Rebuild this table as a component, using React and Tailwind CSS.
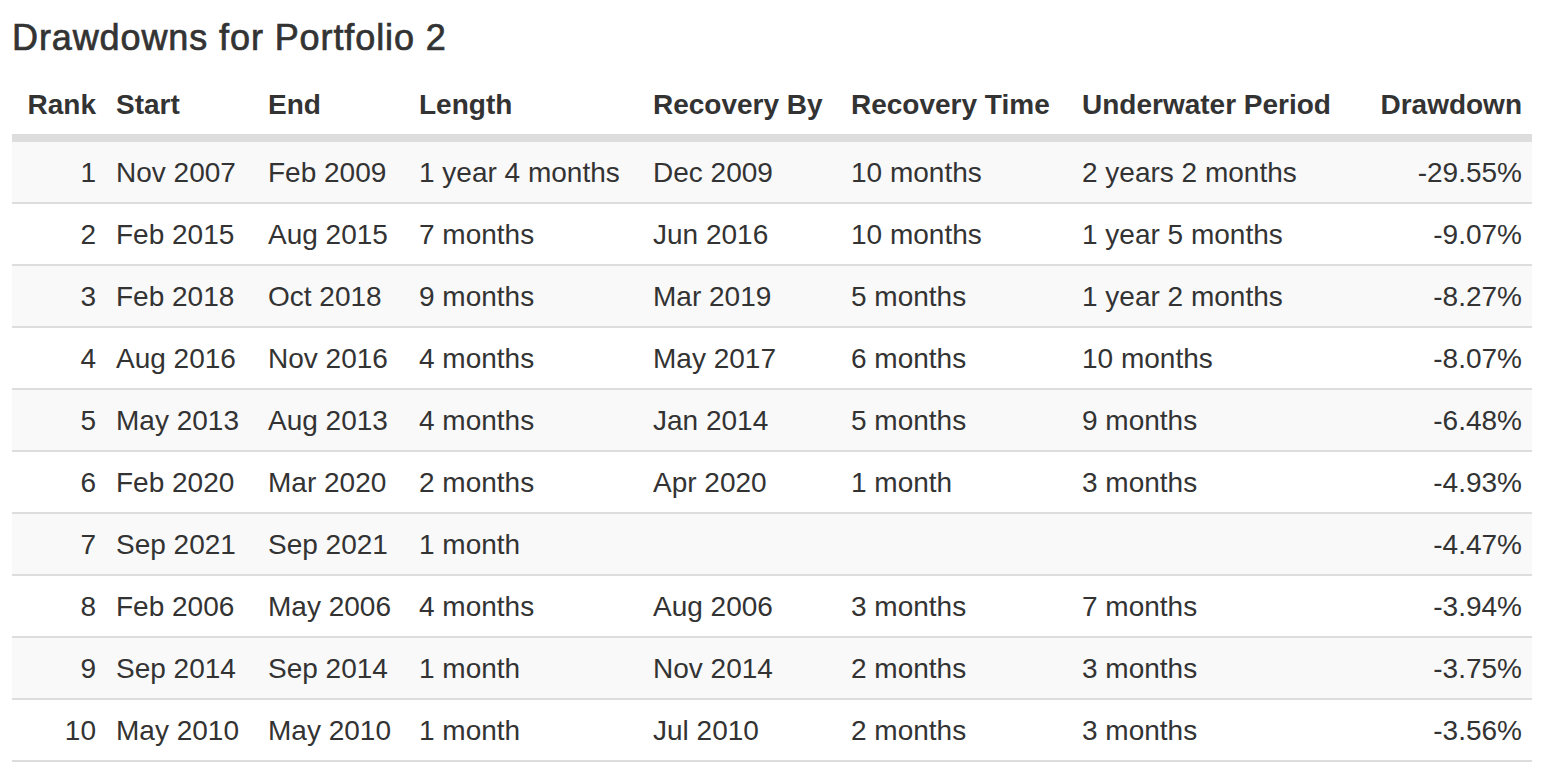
// Drawdowns table — condensed striped table, rendered at 2x scale.

var COLUMNS = [
  { key: 'rank',      label: 'Rank',            width: 'w-[94px]',  right: true },
  { key: 'start',     label: 'Start',           width: 'w-[152px]' },
  { key: 'end',       label: 'End',             width: 'w-[151px]' },
  { key: 'length',    label: 'Length',          width: 'w-[234px]' },
  { key: 'recBy',     label: 'Recovery By',     width: 'w-[198px]' },
  { key: 'recTime',   label: 'Recovery Time',   width: 'w-[231px]' },
  { key: 'under',     label: 'Underwater Period', width: 'w-[297px]' },
  { key: 'drawdown',  label: 'Drawdown',        width: 'w-[163px]', right: true },
]

var ROWS = [
  ['1',  'Nov 2007', 'Feb 2009', '1 year 4 months', 'Dec 2009', '10 months', '2 years 2 months', '-29.55%'],
  ['2',  'Feb 2015', 'Aug 2015', '7 months',        'Jun 2016', '10 months', '1 year 5 months',  '-9.07%'],
  ['3',  'Feb 2018', 'Oct 2018', '9 months',        'Mar 2019', '5 months',  '1 year 2 months',  '-8.27%'],
  ['4',  'Aug 2016', 'Nov 2016', '4 months',        'May 2017', '6 months',  '10 months',        '-8.07%'],
  ['5',  'May 2013', 'Aug 2013', '4 months',        'Jan 2014', '5 months',  '9 months',         '-6.48%'],
  ['6',  'Feb 2020', 'Mar 2020', '2 months',        'Apr 2020', '1 month',   '3 months',         '-4.93%'],
  ['7',  'Sep 2021', 'Sep 2021', '1 month',         '',         '',          '',                 '-4.47%'],
  ['8',  'Feb 2006', 'May 2006', '4 months',        'Aug 2006', '3 months',  '7 months',         '-3.94%'],
  ['9',  'Sep 2014', 'Sep 2014', '1 month',         'Nov 2014', '2 months',  '3 months',         '-3.75%'],
  ['10', 'May 2010', 'May 2010', '1 month',         'Jul 2010', '2 months',  '3 months',         '-3.56%'],
]

export default function App() {
  return (
    <div
      className="min-h-screen bg-white px-[12px] pt-[17px] text-[#333333]"
      style={{ fontFamily: "'Liberation Sans', Arial, Helvetica, sans-serif" }}
    >
      <h4 className="pt-[1px] text-[36px] leading-[40px] tracking-[0.9px] [-webkit-text-stroke:0.7px_#333333]">
        Drawdowns for Portfolio 2
      </h4>

      <table className="mt-[16px] w-[1520px] table-fixed border-separate border-spacing-0 text-[28px] leading-[40px]">
        <colgroup>
          {COLUMNS.map(function (c) {
            return <col key={c.key} className={c.width} />
          })}
        </colgroup>
        <thead>
          <tr>
            {COLUMNS.map(function (c) {
              return (
                <th
                  key={c.key}
                  className={
                    'whitespace-nowrap border-b-[6px] border-[#dddddd] px-[10px] pt-[11px] pb-[9px] align-bottom font-bold ' +
                    (c.right ? 'text-right' : 'text-left')
                  }
                >
                  {c.label}
                </th>
              )
            })}
          </tr>
        </thead>
        <tbody>
          {ROWS.map(function (row, i) {
            var last = i === ROWS.length - 1
            return (
              <tr key={row[0]} className={i % 2 === 0 ? 'bg-[#f9f9f9]' : 'bg-white'}>
                {row.map(function (cell, j) {
                  return (
                    <td
                      key={j}
                      className={
                        'whitespace-nowrap border-t-2 border-[#dddddd] px-[10px] pt-[11px] pb-[9px] ' +
                        (last ? 'border-b-2 ' : '') +
                        (COLUMNS[j].right ? 'text-right' : 'text-left')
                      }
                    >
                      {cell}
                    </td>
                  )
                })}
              </tr>
            )
          })}
        </tbody>
      </table>
    </div>
  )
}
